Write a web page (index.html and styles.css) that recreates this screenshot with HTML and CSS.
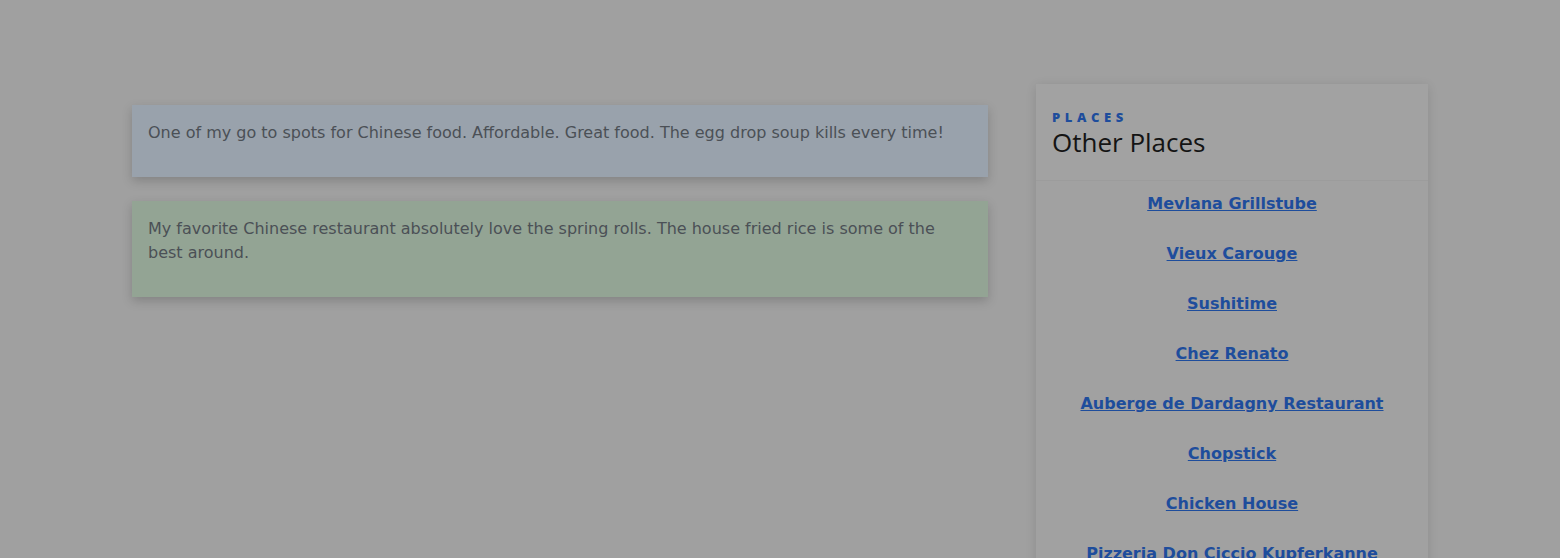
FILE: index.html
```html
<!DOCTYPE html>
<html lang="en">
<head>
<meta charset="utf-8">
<title>Reviews</title>
<link rel="stylesheet" href="styles.css">
</head>
<body>
<main class="container">
  <section class="reviews">
    <article class="review review-blue">
      <p>One of my go to spots for Chinese food. Affordable. Great food. The egg drop soup kills every time!</p>
    </article>
    <article class="review review-green">
      <p>My favorite Chinese restaurant absolutely love the spring rolls. The house fried rice is some of the best around.</p>
    </article>
  </section>
  <aside class="panel">
    <header class="panel-header">
      <div class="eyebrow">PLACES</div>
      <h2 class="panel-title">Other Places</h2>
    </header>
    <ul class="place-list">
      <li><a href="#">Mevlana Grillstube</a></li>
      <li><a href="#">Vieux Carouge</a></li>
      <li><a href="#">Sushitime</a></li>
      <li><a href="#">Chez Renato</a></li>
      <li><a href="#">Auberge de Dardagny Restaurant</a></li>
      <li><a href="#">Chopstick</a></li>
      <li><a href="#">Chicken House</a></li>
      <li><a href="#">Pizzeria Don Ciccio Kupferkanne</a></li>
    </ul>
  </aside>
</main>
</body>
</html>
```

FILE: styles.css
```css
html, body {
  margin: 0;
  padding: 0;
  height: 100%;
  overflow: hidden;
}
body {
  background: #a0a0a0;
  font-family: "DejaVu Sans", sans-serif;
  font-size: 16px;
  line-height: 1.5;
  color: #4b5056;
}
.container {
  width: 1296px;
  margin: 0 auto;
  display: grid;
  grid-template-columns: 856px 1fr;
  column-gap: 24px;
  align-items: start;
}
.reviews {
  padding-top: 105px;
  display: flex;
  flex-direction: column;
  gap: 24px;
}
.review {
  padding: 16px 16px 0;
  box-shadow: 0 4px 10px rgba(0, 0, 0, 0.18);
}
.review p {
  margin: 0 0 32px;
}
.review-blue {
  background: #99a2ac;
}
.review-green {
  background: #93a494;
}
.panel {
  margin-top: 84px;
  margin-left: 24px;
  background: #a1a1a1;
  box-shadow: 0 2px 10px rgba(0, 0, 0, 0.12);
}
.panel-header {
  padding: 25px 16px 22px;
  border-bottom: 1px solid #9c9c9c;
  background: #a2a2a2;
}
.eyebrow {
  font-family: "Open Sans", sans-serif;
  font-weight: 800;
  font-size: 13px;
  letter-spacing: 4.6px;
  line-height: 17px;
  color: #1e4d9c;
}
.panel-title {
  margin: 0;
  font-family: "Open Sans", sans-serif;
  font-weight: 400;
  font-size: 26px;
  line-height: 32px;
  color: #141414;
}
.place-list {
  list-style: none;
  margin: 0;
  padding: 11px 0 0;
  text-align: center;
}
.place-list li {
  margin-bottom: 26px;
  line-height: 24px;
}
.place-list a {
  color: #1e4d9c;
  font-weight: 700;
  text-decoration: underline;
}
```
